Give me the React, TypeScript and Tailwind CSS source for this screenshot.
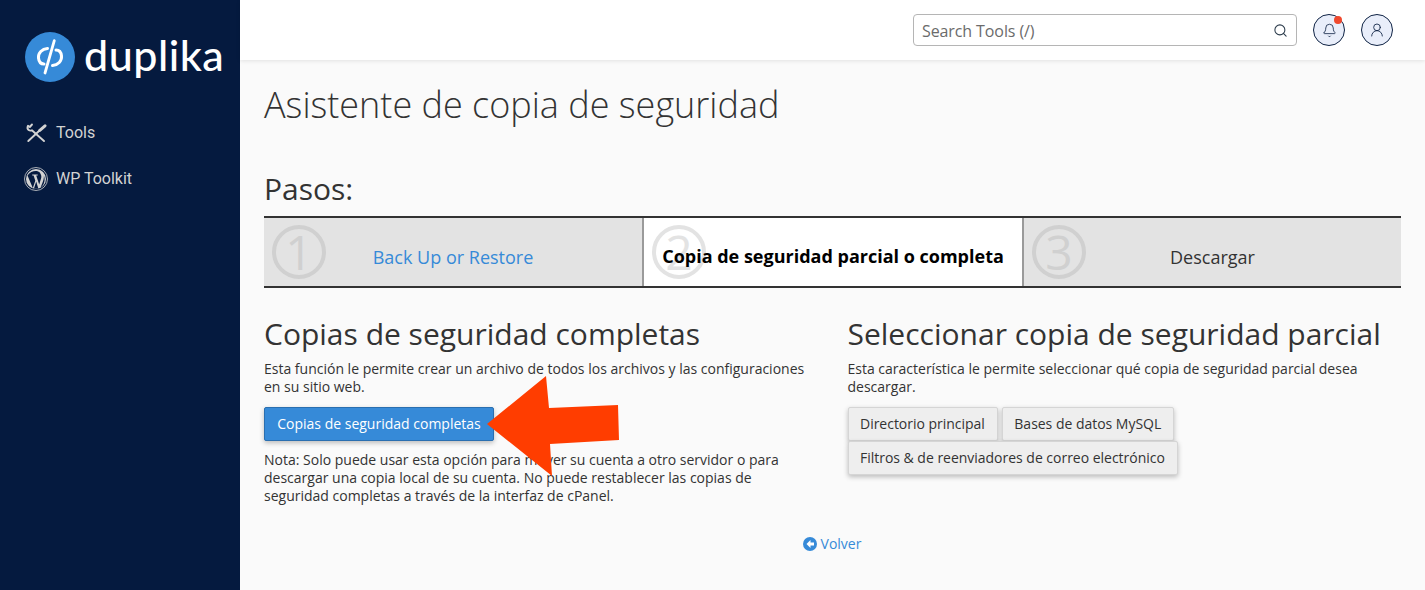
import { Search, Bell, UserRound } from "lucide-react";

const steps = [
  { num: "1", label: "Back Up or Restore", state: "link" },
  { num: "2", label: "Copia de seguridad parcial o completa", state: "active" },
  { num: "3", label: "Descargar", state: "idle" },
];

const Sidebar = () => (
  <aside className="w-[240px] shrink-0 bg-[#051a3f] min-h-[590px]">
    <div className="flex items-center pl-[25px] pt-[32px] h-[82px]">
      <svg width="50" height="50" viewBox="0 0 50 50" className="shrink-0">
        <circle cx="25" cy="25" r="25" fill="#368ad8" />
        <path d="M22.500 16.500C17 17 13 21 13.500 26c.4 4 2.500 6 5.500 6" fill="none" stroke="#fff" strokeWidth="3" strokeLinecap="round" />
        <path d="M27.500 33.500C33 33 37 29 36.500 24c-.4-4-2.500-6-5.500-6" fill="none" stroke="#fff" strokeWidth="3" strokeLinecap="round" />
        <path d="M29.300 8.700 20 41" fill="none" stroke="#fff" strokeWidth="2.800" strokeLinecap="round" />
      </svg>
      <span className="ml-[9px] text-white text-[43px] leading-none font-['Lato',sans-serif] font-medium tracking-[0.5px] relative top-[-3px]">
        duplika
      </span>
    </div>
    <nav className="mt-[28px] font-['Roboto',sans-serif] text-[16px] text-[#d3d3d3]">
      <div className="flex items-center h-[46px] pl-[25px]">
        <svg width="22" height="22" viewBox="0 0 22 22" fill="none" stroke="#d3d3d3" strokeWidth="1.900" strokeLinecap="round" strokeLinejoin="round" className="mr-[9px]">
          <path d="M7 2.500 4.800 5 3 3.700c-.8 1.800-.5 3.500.6 4.300 1 .7 2.200.8 3.300.3L19 19" />
          <path d="M20 3.800 14.800 8.300" strokeWidth="3" />
          <path d="M14.800 8.300 3.300 19" />
        </svg>
        Tools
      </div>
      <div className="flex items-center h-[46px] pl-[24px]">
        <svg width="24" height="24" viewBox="0 0 24 24" className="mr-[8px]">
          <circle cx="12" cy="12" r="11.500" fill="none" stroke="#d3d3d3" strokeWidth="0.800" />
          <circle cx="12" cy="12" r="10" fill="#d3d3d3" />
          <path d="M3.500 8.500 8.800 21l2.500-7.200-1.700-5.300H8.200v-.9h5.500v.9h-1.500l3 8.900 2-6.300c.5-1.800-.2-3.600-1.400-5.500C14 3 7 3 3.500 8.500Z" fill="#051a3f" />
          <path d="M12.200 14.500 10 21.500c1.400.4 2.800.4 4.300-.1ZM19.800 8.500c.4 2-.2 5-3.200 12 3.800-2.500 5-8 3.200-12Z" fill="#051a3f" />
        </svg>
        WP Toolkit
      </div>
    </nav>
  </aside>
);

const Header = () => (
  <header className="h-[60px] bg-white shadow-[0_1px_4px_rgba(0,0,0,0.1)] flex items-center relative">
    <div className="ml-[673px] w-[384px] h-[32px] border border-[#b5b5b5] rounded-[4px] flex items-center justify-between pl-[8px] pr-[8px]">
      <span className="font-['Open_Sans',sans-serif] text-[16px] tracking-[-0.1px] text-[#6b6b6b] pt-[2px]">Search Tools (/)</span>
      <Search size={15} strokeWidth={1.700} className="text-[#2a3a4a]" />
    </div>
    <div className="relative ml-[16px] w-[32px] h-[32px] rounded-full border border-[#0f2344] bg-[#e9eefa] flex items-center justify-center">
      <Bell size={15} strokeWidth={1.300} className="text-[#0f2344]" />
      <span className="absolute top-[1px] right-[2px] w-[8px] h-[8px] rounded-full bg-[#f0492e]" />
    </div>
    <div className="ml-[16px] w-[32px] h-[32px] rounded-full border border-[#0f2344] bg-[#e9eefa] flex items-center justify-center">
      <UserRound size={16} strokeWidth={1.300} className="text-[#0f2344]" />
    </div>
  </header>
);

const StepBar = () => (
  <div className="flex h-[72px] border-y-2 border-[#333]">
    {steps.map((step, i) => (
      <div
        key={step.num}
        className={`relative flex items-center justify-center ${i === 2 ? "w-[377px]" : "w-[380px]"} ${step.state === "active" ? "bg-white" : "bg-[#e3e3e3]"} ${i < 2 ? "border-r-2 border-[#9a9a9a]" : ""}`}
      >
        <span className={`absolute left-[8px] top-[7px] w-[54px] h-[54px] rounded-full border-[4px] flex items-center justify-center font-['Open_Sans',sans-serif] text-[48px] leading-none font-normal ${step.state === "active" ? "border-[#e3e3e3] text-[#e3e3e3]" : "border-[#d0d0d0] text-[#d0d0d0]"}`}>
          {step.num}
        </span>
        <span
          className={`relative text-[18px] ${step.state === "active" ? "font-bold text-black mt-[9px]" : "mt-[10px]"} ${step.state === "link" ? "text-[#368ad8]" : ""} ${step.state === "idle" ? "text-[#333]" : ""}`}
        >
          {step.label}
        </span>
      </div>
    ))}
  </div>
);

const GreyBtn = ({ label }: { label: string }) => (
  <span className="inline-block h-[34px] leading-[32px] pl-[11.5px] pr-[12px] bg-[#eeeeee] border border-[#d5d5d5] rounded-[2px] text-[14px] tracking-[-0.02px] text-[#333] shadow-[0_2px_5px_rgba(0,0,0,0.25)]">
    {label}
  </span>
);

export default function App() {
  return (
    <div className="flex w-[1425px] h-[590px] overflow-hidden bg-[#fafafa] font-['Open_Sans',sans-serif] relative">
      <Sidebar />
      <div className="flex-1 min-w-0">
        <Header />
        <main className="px-[24px]">
          <h1 className="text-[36px] leading-[44px] text-[#333] font-light mt-[23px]">Asistente de copia de seguridad</h1>
          <h2 className="text-[30px] leading-[40px] text-[#333] font-normal mt-[42px] mb-[7px]">Pasos:</h2>
          <StepBar />
          <div className="grid grid-cols-[559.5px_1fr] gap-x-[24px] mt-[26px] text-[14px] leading-[18px] text-[#333]">
            <section>
              <h3 className="text-[30px] leading-[40px] font-normal mb-[6px]">Copias de seguridad completas</h3>
              <p>
                Esta función le permite crear un archivo de todos los archivos y las configuraciones en su sitio web.
              </p>
              <div className="mt-[11px] w-[230px] h-[34px] leading-[32px] text-center bg-[#368ad8] border border-[#2a6fb0] rounded-[2px] text-white shadow-[0_2px_5px_rgba(0,0,0,0.25)]">
                Copias de seguridad completas
              </div>
              <p className="mt-[10px] w-[530px]">
                Nota: Solo puede usar esta opción para mover su cuenta a otro servidor o para descargar una copia local de su cuenta. No puede restablecer las copias de seguridad completas a través de la interfaz de cPanel.
              </p>
            </section>
            <section>
              <h3 className="text-[30px] leading-[40px] font-normal mb-[6px]">Seleccionar copia de seguridad parcial</h3>
              <p>Esta característica le permite seleccionar qué copia de seguridad parcial desea descargar.</p>
              <div className="mt-[11px] flex flex-wrap gap-x-[4px] w-[340px]">
                <GreyBtn label="Directorio principal" />
                <GreyBtn label="Bases de datos MySQL" />
                <GreyBtn label="Filtros & de reenviadores de correo electrónico" />
              </div>
            </section>
          </div>
          <div className="flex items-center justify-center gap-[4px] text-[14px] text-[#368ad8] mt-[28px] ml-[-1px]">
            <svg width="14" height="14" viewBox="0 0 14 14">
              <circle cx="7" cy="7" r="7" fill="#368ad8" />
              <path d="M7.500 3 3.500 7l4 4V8.500h3.500v-3H7.500Z" fill="#fff" />
            </svg>
            Volver
          </div>
        </main>
      </div>
      {/* red arrow drawn over the page */}
      <svg width="140" height="110" viewBox="0 0 140 110" className="absolute left-[485px] top-[372px]">
        <path d="M2 52 61 4 64 36 133 33 134 68 65 72 67 104Z" fill="#ff3d00" />
      </svg>
    </div>
  );
}
